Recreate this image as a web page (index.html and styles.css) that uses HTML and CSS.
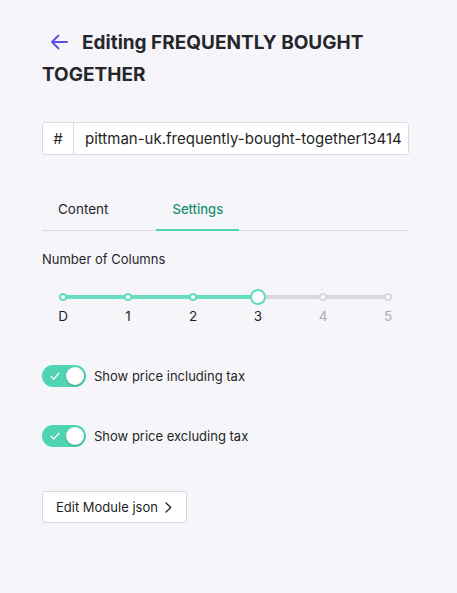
FILE: index.html
```html
<!DOCTYPE html>
<html>
<head>
<meta charset="utf-8">
<link rel="stylesheet" href="styles.css">
</head>
<body>
<div class="panel">
  <h1 class="title"><span class="back"><svg width="18" height="16" viewBox="0 0 18 16"><path d="M17 8H2M8.5 1.5L2 8l6.5 6.5" fill="none" stroke="#5b4fe3" stroke-width="1.8" stroke-linecap="round" stroke-linejoin="round"/></svg></span>Editing FREQUENTLY BOUGHT TOGETHER</h1>

  <div class="idfield">
    <span class="hash">#</span>
    <span class="idval">pittman-uk.frequently-bought-together13414</span>
  </div>

  <div class="tabs">
    <div class="tab">Content</div>
    <div class="tab active">Settings</div>
  </div>

  <div class="label">Number of Columns</div>
  <div class="slider">
    <div class="track">
      <div class="fill"></div>
      <span class="dot on" style="left:0%"></span>
      <span class="dot on" style="left:20%"></span>
      <span class="dot on" style="left:40%"></span>
      <span class="knob" style="left:60%"></span>
      <span class="dot" style="left:80%"></span>
      <span class="dot" style="left:100%"></span>
    </div>
    <div class="ticks">
      <span class="tick">D</span>
      <span class="tick">1</span>
      <span class="tick">2</span>
      <span class="tick">3</span>
      <span class="tick off">4</span>
      <span class="tick off">5</span>
    </div>
  </div>

  <div class="toggle-row">
    <span class="toggle"><svg class="check" width="10" height="8" viewBox="0 0 10 8"><path d="M1 4.2l2.8 2.8L9 1.2" fill="none" stroke="#fff" stroke-width="1.2" stroke-linecap="round" stroke-linejoin="round"/></svg><span class="thumb"></span></span>
    <span class="toggle-label">Show price including tax</span>
  </div>
  <div class="toggle-row second">
    <span class="toggle"><svg class="check" width="10" height="8" viewBox="0 0 10 8"><path d="M1 4.2l2.8 2.8L9 1.2" fill="none" stroke="#fff" stroke-width="1.2" stroke-linecap="round" stroke-linejoin="round"/></svg><span class="thumb"></span></span>
    <span class="toggle-label">Show price excluding tax</span>
  </div>

  <button class="btn">Edit Module json <svg width="7" height="11" viewBox="0 0 7 11"><path d="M1 1l4.8 4.5L1 10" fill="none" stroke="#1f1f24" stroke-width="1.2" stroke-linecap="round" stroke-linejoin="round"/></svg></button>
</div>
</body>
</html>
```

FILE: styles.css
```css
* { box-sizing: border-box; }
html, body { margin: 0; padding: 0; }
body {
  background: #f6f6fa;
  font-family: Inter, "Noto Sans", sans-serif;
  color: #1f1f24;
  width: 457px;
  height: 593px;
  overflow: hidden;
}
.panel {
  padding: 27px 48px 0 42px;
}
.title {
  margin: 0;
  font-size: 19px;
  font-weight: 700;
  line-height: 32px;
  color: #26262b;
}
.back {
  display: inline-block;
  width: 40px;
  padding-left: 8px;
  vertical-align: -1px;
}
.back svg { display: block; }
.idfield {
  margin-top: 31px;
  height: 33px;
  display: flex;
  align-items: center;
  background: #fff;
  border: 1px solid #d9d9df;
  border-radius: 3px;
  font-size: 15px;
}
.hash {
  width: 31px;
  height: 100%;
  display: flex;
  align-items: center;
  justify-content: center;
  border-right: 1px solid #d9d9df;
}
.idval { padding-left: 11px; }
.tabs {
  margin-top: 46px;
  display: flex;
  gap: 32px;
  border-bottom: 1px solid #d8d8de;
  font-size: 13.5px;
  line-height: 17px;
}
.tab {
  padding: 0 16px 11px;
  margin-bottom: -1px;
  border-bottom: 2px solid transparent;
  color: #1f1f24;
}
.tab.active {
  color: #1d8f6f;
  font-weight: 500;
  font-size: 13px;
  border-bottom-color: #4fd5b5;
}
.label {
  margin-top: 20px;
  font-size: 13px;
  line-height: 16px;
  color: #26262b;
}
.slider {
  margin-top: 28px;
  padding: 0 21px;
}
.track {
  position: relative;
  height: 4px;
  border-radius: 2px;
  background: #d8d8dd;
}
.fill {
  position: absolute;
  left: 0; top: 0; bottom: 0;
  width: 60%;
  background: #66ddc0;
  border-radius: 2px;
}
.dot {
  position: absolute;
  top: 50%;
  width: 8px; height: 8px;
  margin: -4px 0 0 -4px;
  border-radius: 50%;
  background: #fff;
  border: 2px solid #d8d8dd;
}
.dot.on { border-color: #66ddc0; }
.knob {
  position: absolute;
  top: 50%;
  width: 16px; height: 16px;
  margin: -8px 0 0 -8px;
  border-radius: 50%;
  background: #fff;
  border: 2px solid #5fdbbd;
}
.ticks {
  position: relative;
  height: 16px;
  line-height: 16px;
  margin-top: 9px;
  font-size: 13.5px;
}
.tick {
  position: absolute;
  top: 0;
  transform: translateX(-50%);
  color: #1f1f24;
}
.tick:nth-child(1) { left: 0%; }
.tick:nth-child(2) { left: 20%; }
.tick:nth-child(3) { left: 40%; }
.tick:nth-child(4) { left: 60%; }
.tick:nth-child(5) { left: 80%; }
.tick:nth-child(6) { left: 100%; }
.tick.off { color: #a9a9b0; }
.toggle-row {
  display: flex;
  align-items: center;
  gap: 8px;
  font-size: 13px;
  line-height: 16px;
  margin-top: 41px;
}
.toggle-row.second { margin-top: 38px; }
.toggle {
  position: relative;
  width: 44px;
  height: 22px;
  border-radius: 11px;
  background: #4fd4b3;
  display: flex;
  align-items: center;
  padding-left: 8px;
}
.check { display: block; }
.thumb {
  position: absolute;
  right: 2px;
  top: 2px;
  width: 18px; height: 18px;
  border-radius: 50%;
  background: #fff;
  box-shadow: 0 1px 2px rgba(0,0,0,0.25);
}
.toggle-label { color: #1f1f24; }
.btn {
  margin-top: 44px;
  height: 32px;
  width: max-content;
  padding: 0 14px 0 13px;
  display: flex;
  align-items: center;
  gap: 7px;
  background: #fff;
  border: 1px solid #d6d6dc;
  border-radius: 3px;
  font-family: Inter, "Noto Sans", sans-serif;
  font-size: 13px;
  color: #1f1f24;
}
.btn svg { display: block; }
```
